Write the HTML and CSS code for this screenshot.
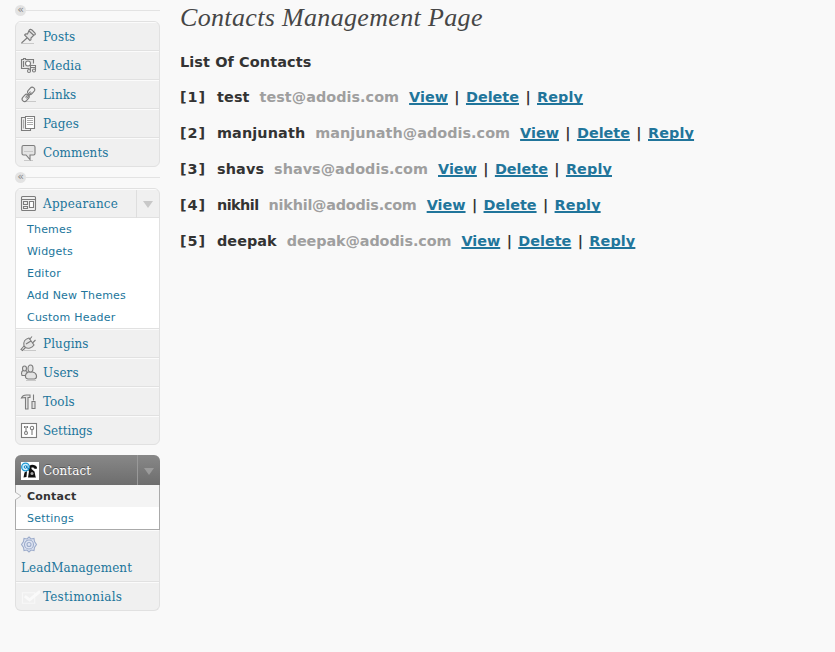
FILE: index.html
```html
<!DOCTYPE html>
<html lang="en">
<head>
<meta charset="utf-8">
<title>Contacts Management Page</title>
<link rel="stylesheet" href="styles.css">
</head>
<body>
<nav class="sidebar">
  <div class="sep"><i>«</i></div>
  <ul class="menu">
    <li class="item"><svg class="ic" viewBox="0 0 18 18"><path class="sh" d="M1 15.500h13"/><path class="g" d="M9 2.500q1-2 3-.5l3 3q1 2-1 2l-3 3q.5 2-1 2.500L4.500 7q1-1.500 3-1z"/><path d="M7 10l-5.500 5M9 3l5 4.500"/></svg><a>Posts</a></li>
    <li class="item"><svg class="ic" viewBox="0 0 18 18"><path class="g" d="M9.500 11.500h-8v-9h2v-1h2v1h8v4"/><circle class="w" cx="8" cy="6.500" r="2.500"/><path d="M3.500 4v6M10.500 14V8.500h5V13M10.500 10.500h5"/><circle cx="9" cy="14" r="1.500"/><circle cx="14" cy="13.500" r="1.500"/></svg><a>Media</a></li>
    <li class="item"><svg class="ic" viewBox="0 0 18 18"><path class="sh" d="M3 15.500h13"/><rect x="8.500" y="0.800" width="5" height="8" rx="2.500" transform="rotate(42 11 5)"/><rect x="3" y="7.800" width="5" height="8" rx="2.500" transform="rotate(42 5.500 12)"/><path d="M10.500 5.500l-5 6M11.500 6.500l-5 6"/></svg><a>Links</a></li>
    <li class="item"><svg class="ic" viewBox="0 0 18 18"><path d="M6 2.500H1.500v13h9V14"/><path class="w" d="M5.500 1.500h9v12h-9z"/><path class="lt" d="M7 3.500h6M7 5.500h6M7 7.500h6M7 9.500h6M3.500 4.500v9"/></svg><a>Pages</a></li>
    <li class="item"><svg class="ic" viewBox="0 0 18 18"><path class="sh" d="M4 16.500h9"/><path class="g" d="M3.500 1.500h10q1.500 0 1.500 1.500v6.500q0 1.500-1.500 1.500H10v4.500L6 11H3.500Q2 11 2 9.500V3q0-1.500 1.500-1.500z"/><path class="sh" d="M4 7.500h9"/></svg><a>Comments</a></li>
  </ul>
  <div class="sep"><i>«</i></div>
  <ul class="menu">
    <li class="item head"><svg class="ic" viewBox="0 0 18 18"><rect x="1.500" y="1.500" width="14" height="14" rx="1"/><path d="M2 4.500h13M3.500 6.500h4v3h-4zM3.500 11.500h4v2h-4z"/><path class="w" d="M9.500 6.500h4v6h-4z"/></svg><a class="wide">Appearance</a><b class="tog"></b></li>
    <li class="sub"><a>Themes</a><a>Widgets</a><a>Editor</a><a>Add New Themes</a><a>Custom Header</a></li>
    <li class="item"><svg class="ic" viewBox="0 0 18 18"><path class="sh" d="M4 15.500h12"/><path class="g" d="M4 11c-1-4 1-7 5-8l5 7c-2 3-6 4-8.500 2.500z"/><path d="M4 11l-3 3.500 1.500 1L5.500 12.500M9.500 4.500L12 1.500M12.500 8L15.500 5M6 9l5-3"/></svg><a>Plugins</a></li>
    <li class="item"><svg class="ic" viewBox="0 0 18 18"><path class="sh" d="M6 16.500h10"/><path class="g" d="M5 6.500c3 0 3 5 1 5H3c-2 0-2-4 0-5z"/><ellipse class="g" cx="4.500" cy="4.500" rx="2" ry="2.500"/><path class="g" d="M8.500 8h4c5 1 5 6.500 2 7H8c-4-.5-3-6 .5-7z"/><ellipse class="g" cx="10.500" cy="4.500" rx="2.500" ry="3.500"/></svg><a>Users</a></li>
    <li class="item"><svg class="ic" viewBox="0 0 18 18"><path class="g" d="M1.500 5c1-3 3-3 5-3h3.500v2.500H8V16H5.500V4.500c-2 0-2.500 0-4 .5zM13.500 1.500v6M12 8.500h3v7h-3z"/></svg><a>Tools</a></li>
    <li class="item"><svg class="ic" viewBox="0 0 18 18"><rect class="w" x="1.500" y="1.500" width="15" height="14"/><path d="M6 4v6M12 8v5M4.500 4v2M7.500 4v2"/><circle cx="6" cy="11" r="1.500"/><circle cx="12" cy="6" r="1.700"/></svg><a class="tight">Settings</a></li>
  </ul>
  <ul class="menu current">
    <li class="item head"><svg class="pic" viewBox="0 0 18 18"><path fill="#fff" d="M0 0h18v18H0z"/><path fill="#111" d="M7 5.500q1-2.500 4-2.800 4 0 5 2.800l-.5 1.500-2.500-.5-.5-1h-2v1.500l3 2.500 1 5 .5 1H7l1-6-1-2zM3.500 10.500L6 9l-.5 6-3 .5z"/><circle cx="11" cy="11.500" r="1.500" fill="#aaa"/><circle cx="4.500" cy="5" r="3.800" fill="#d5f1ff" stroke="#1c9ad5" stroke-width="1.300"/><circle cx="4.500" cy="5" r="1.300" fill="none" stroke="#087dbc"/><path d="M6 3.500V6l2 .5" fill="none" stroke="#087dbc"/></svg><a>Contact</a><b class="tog"></b></li>
    <li class="sub"><a class="on">Contact<svg class="notch" viewBox="0 0 7 8"><path d="M0 0L6 4 0 8" fill="#f9f9f9" stroke="#bbb"/></svg></a><a>Settings</a></li>
    <li class="item lead"><svg class="ic" viewBox="0 0 18 18"><g class="gear"><path d="M9 1l2 2 3-.5.500 3 2 3-2 3-.5 3-3-.5-2 2-2-2-3 .5-.5-3-2-3 2-3 .5-3 3 .5z"/><circle cx="9" cy="8.500" r="4.500"/><circle cx="9" cy="8.500" r="2"/></g></svg><a>LeadManagement</a></li>
    <li class="item"><svg class="ic check" viewBox="0 0 20 18"><path d="M1.500 4.500h13v11h-13z" stroke="#f8f8f8"/><path d="M4 8l5 4L20 3" stroke="#fafafa" stroke-width="3"/></svg><a class="wide">Testimonials</a></li>
  </ul>
</nav>
<main>
  <h1>Contacts Management Page</h1>
  <h4>List Of Contacts</h4>
  <div class="row"><b>[1]</b><span>test</span><em>test@adodis.com</em><a>View</a><s>|</s><a>Delete</a><s>|</s><a>Reply</a></div>
  <div class="row"><b>[2]</b><span>manjunath</span><em>manjunath@adodis.com</em><a>View</a><s>|</s><a>Delete</a><s>|</s><a>Reply</a></div>
  <div class="row"><b>[3]</b><span>shavs</span><em>shavs@adodis.com</em><a>View</a><s>|</s><a>Delete</a><s>|</s><a>Reply</a></div>
  <div class="row narrow"><b>[4]</b><span>nikhil</span><em>nikhil@adodis.com</em><a>View</a><s>|</s><a>Delete</a><s>|</s><a>Reply</a></div>
  <div class="row last"><b>[5]</b><span>deepak</span><em>deepak@adodis.com</em><a>View</a><s>|</s><a>Delete</a><s>|</s><a>Reply</a></div>
</main>
</body>
</html>
```
FILE: styles.css
```css
* { box-sizing: border-box; }
body { margin: 0; height: 652px; overflow: hidden; background: #f9f9f9; color: #333; font-family: "DejaVu Sans", sans-serif; display: flex; }
a { color: #21759b; }
.sidebar { width: 145px; margin-left: 15px; padding-top: 4px; flex: none; }
.sep { height: 12px; display: flex; align-items: center; margin-bottom: 5px; }
.sep i { width: 11px; height: 11px; border-radius: 50%; background: #e3e3e3; color: #888; font: 11px/9px "DejaVu Sans", sans-serif; text-align: center; }
.sep::after { content: ""; flex: 1; height: 1px; background: #e3e3e3; }
.menu { list-style: none; margin: 0; padding: 0; border: 1px solid #e1e1e1; border-radius: 6px; background: #f0f0f0; overflow: hidden; }
.menu + .sep { margin-top: 4px; }
.menu + .menu { margin-top: 10px; }
.item { height: 29px; display: flex; align-items: center; border-top: 1px solid #fbfbfb; border-bottom: 1px solid #e1e1e1; padding-left: 4px; font: 13.300px/20px "DejaVu Serif Condensed", "DejaVu Serif", serif; letter-spacing: .1px; }
.item:last-child { height: 28px; border-bottom: 0; }
.wide { letter-spacing: .27px; }
.tight { letter-spacing: -.1px; }
.ic { width: 18px; height: 18px; margin-right: 5px; flex: none; fill: none; stroke: #7c7c7c; stroke-width: 1.100; }
.ic .sh { stroke: #c8c8c8; }
.ic .lt { stroke: #aaa; }
.ic .w { fill: #fff; }
.ic .g { fill: #e4e4e4; }
.ic .gear { stroke: #9daccb; fill: #dfe5f2; }
.tog { margin-left: auto; width: 23px; height: 28px; border-left: 1px solid #dedede; display: flex; align-items: center; justify-content: center; }
.tog::after { content: ""; border: 5px solid transparent; border-top: 7px solid #c8c8c8; border-bottom: 0; margin: 2px 1px 0 0; }
.sub { background: #fff; border-bottom: 1px solid #e1e1e1; font-size: 11px; letter-spacing: .22px; }
.sub a { display: block; height: 22px; line-height: 23px; padding-left: 11px; position: relative; }
.current { border-top: 0; overflow: visible; }
.current .head { height: 30px; margin: 0 -1px; padding-left: 6px; border: 0; border-radius: 6px 6px 0 0; background: linear-gradient(#888, #6d6d6d); }
.current .head a { color: #fff; text-shadow: 0 -1px 0 #555; padding-top: 1px; }
.pic { width: 18px; height: 18px; margin: 1px 4px 0 0; }
.current .tog { width: 23px; height: 30px; border-color: #999; }
.current .tog::after { border-top-color: #9b9b9b; }
.current .sub { margin: 0 -1px; border: 1px solid #aaa; border-top: 0; }
.sub .on { background: #f4f4f4; color: #333; font-weight: bold; }
.notch { position: absolute; left: -1px; top: 7px; width: 7px; height: 8px; }
.lead { height: 52px; flex-direction: column; align-items: flex-start; padding-top: 5px; }
.lead a { margin: 4px 0 0 1px; }
.check { margin: 0 3px 0 1px; width: 19px; }
main { margin-left: 20px; }
h1 { margin: 0; height: 36px; font: italic 26px/36px "Liberation Serif", serif; letter-spacing: .34px; color: #464646; white-space: nowrap; }
h4 { margin: 17px 0; height: 18px; font-size: 14.500px; line-height: 19px; letter-spacing: .07px; }
.row { display: flex; height: 18px; margin-bottom: 18px; font-size: 14.400px; line-height: 19px; font-weight: bold; white-space: nowrap; }
.row b { width: 37px; letter-spacing: 1px; }
.row span, .row em { margin-right: 10px; font-style: normal; letter-spacing: .12px; }
.row em { color: #9f9f9f; letter-spacing: .03px; }
.narrow span { letter-spacing: -.55px; }
.narrow em { letter-spacing: -.22px; }
.last span { letter-spacing: .05px; }
.last em { letter-spacing: -.1px; }
.row a { text-decoration: underline; text-decoration-thickness: 2px; text-underline-offset: 1px; text-decoration-skip-ink: none; }
.row a:last-child { letter-spacing: .12px; }
.row s { width: 18px; text-align: center; text-decoration: none; }
```
